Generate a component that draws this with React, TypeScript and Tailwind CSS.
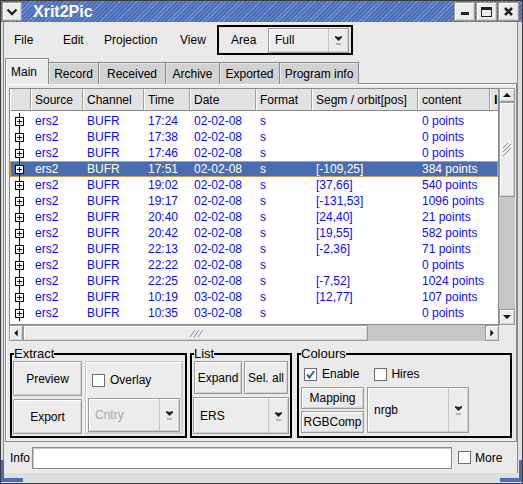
import React from "react";

type Row = { time: string; date: string; segm: string; content: string };

const ROWS: Row[] = [
  { time: "17:24", date: "02-02-08", segm: "", content: "0 points" },
  { time: "17:38", date: "02-02-08", segm: "", content: "0 points" },
  { time: "17:46", date: "02-02-08", segm: "", content: "0 points" },
  { time: "17:51", date: "02-02-08", segm: "[-109,25]", content: "384 points" },
  { time: "19:02", date: "02-02-08", segm: "[37,66]", content: "540 points" },
  { time: "19:17", date: "02-02-08", segm: "[-131,53]", content: "1096 points" },
  { time: "20:40", date: "02-02-08", segm: "[24,40]", content: "21 points" },
  { time: "20:42", date: "02-02-08", segm: "[19,55]", content: "582 points" },
  { time: "22:13", date: "02-02-08", segm: "[-2,36]", content: "71 points" },
  { time: "22:22", date: "02-02-08", segm: "", content: "0 points" },
  { time: "22:25", date: "02-02-08", segm: "[-7,52]", content: "1024 points" },
  { time: "10:19", date: "03-02-08", segm: "[12,77]", content: "107 points" },
  { time: "10:35", date: "03-02-08", segm: "", content: "0 points" },
];

const SELECTED = 3;

const COLS = [
  { label: "", cls: "w-[21px]" },
  { label: "Source", cls: "w-[52px]" },
  { label: "Channel", cls: "w-[61px]" },
  { label: "Time", cls: "w-[46px]" },
  { label: "Date", cls: "w-[66px]" },
  { label: "Format", cls: "w-[56px]" },
  { label: "Segm / orbit[pos]", cls: "w-[106px]" },
  { label: "content", cls: "w-[72px]" },
];

const TABS = [
  { label: "Main", cls: "w-[44px]" },
  { label: "Record", cls: "w-[50px]" },
  { label: "Received", cls: "w-[67px]" },
  { label: "Archive", cls: "w-[54px]" },
  { label: "Exported", cls: "w-[60px]" },
  { label: "Program info", cls: "w-[79px]" },
];

const raised =
  "border border-[#9a9a9a] bg-[#ececec] shadow-[inset_1px_1px_0_#ffffff,inset_-1px_-1px_0_#d2d2d2]";

function ComboArrow() {
  return (
    <svg width="9" height="12" viewBox="0 0 9 12">
      <path d="M1 2 L4.5 3 L8 2 L8 3.5 L4.5 7 L1 3.5 Z" fill="#222" />
      <rect x="2" y="9" width="5" height="2" fill="#b4b4b4" />
    </svg>
  );
}

function Combo({
  label,
  cls,
  arrowCls,
  disabled,
}: {
  label: string;
  cls: string;
  arrowCls: string;
  disabled?: boolean;
}) {
  return (
    <div className={`flex ${raised} ${cls}`}>
      <span
        className={`flex flex-1 items-center pl-[6px] ${disabled ? "text-[#a8a8a8]" : ""}`}
      >
        {label}
      </span>
      <span
        className={`flex items-center justify-center border-l border-[#c4c4c4] ${arrowCls}`}
      >
        <ComboArrow />
      </span>
    </div>
  );
}

function Check({ checked }: { checked?: boolean }) {
  return (
    <span className="flex h-[13px] w-[13px] items-center justify-center border border-[#6e6e6e] bg-white">
      {checked && (
        <svg width="11" height="11" viewBox="0 0 11 11">
          <path d="M2 5.5 L4.5 8.5 L9 2" fill="none" stroke="#3a5fb0" strokeWidth="2" />
        </svg>
      )}
    </span>
  );
}

function PlusBox() {
  return (
    <svg width="21" height="16" viewBox="0 0 21 16">
      <line x1="8.5" y1="0" x2="8.5" y2="16" stroke="#000" />
      <rect x="4.5" y="4.5" width="8" height="8" fill="#fff" stroke="#000" />
      <line x1="6" y1="8.5" x2="11" y2="8.5" stroke="#000" />
      <line x1="8.5" y1="6" x2="8.5" y2="11" stroke="#000" />
    </svg>
  );
}

function Grip({ vertical }: { vertical?: boolean }) {
  return (
    <svg width="14" height="14" viewBox="0 0 14 14">
      {[0, 4, 8].map((o) =>
        vertical ? (
          <line key={o} x1="3" y1={13 - o} x2="11" y2={5 - o} stroke="#8a8a8a" />
        ) : (
          <line key={o} x1={1 + o} y1="11" x2={6 + o} y2="4" stroke="#8a8a8a" />
        )
      )}
    </svg>
  );
}

function Arrow({ dir }: { dir: "up" | "down" | "left" | "right" }) {
  const d = {
    up: "M3 9 L7 5 L11 9 Z",
    down: "M3 5 L7 9 L11 5 Z",
    left: "M9 3 L5 7 L9 11 Z",
    right: "M5 3 L9 7 L5 11 Z",
  }[dir];
  return (
    <svg width="14" height="14" viewBox="0 0 14 14">
      <path d={d} fill="#111" />
    </svg>
  );
}

function TitleBar() {
  return (
    <div className="flex h-[21px] items-center bg-[repeating-linear-gradient(135deg,#6e8fd0_0px,#6e8fd0_1px,#4c6fb8_1px,#4c6fb8_3px)] pl-[1px] pr-[3px]">
      <div className={`flex h-[19px] w-[20px] items-center justify-center ${raised}`}>
        <svg width="12" height="10" viewBox="0 0 12 10">
          <path d="M1.5 2.5 L6 7 L10.5 2.5" fill="none" stroke="#222" strokeWidth="2.4" />
        </svg>
      </div>
      <span className="ml-[11px] flex-1 text-[16px] font-bold text-white">Xrit2Pic</span>
      <div className="flex gap-[1px]">
        <div className={`flex h-[19px] w-[21px] items-end justify-center pb-[5px] ${raised}`}>
          <span className="h-[3px] w-[8px] bg-[#222]" />
        </div>
        <div className={`flex h-[19px] w-[21px] items-center justify-center ${raised}`}>
          <span className="h-[10px] w-[11px] border border-t-[3px] border-[#222]" />
        </div>
        <div className={`flex h-[19px] w-[21px] items-center justify-center ${raised}`}>
          <svg width="11" height="11" viewBox="0 0 11 11">
            <path d="M2 2 L9 9 M9 2 L2 9" stroke="#222" strokeWidth="2.6" />
          </svg>
        </div>
      </div>
    </div>
  );
}

function FileList() {
  return (
    <div className="grid h-[253px] w-[506px] grid-cols-[490px_16px] grid-rows-[237px_16px]">
      <div className="flex flex-col overflow-hidden border border-[#8a8a8a] bg-white">
        <div className="flex h-[22px] shrink-0">
          {COLS.map((c) => (
            <div
              key={c.label}
              className={`flex items-center pl-[3px] ${c.cls} border-b border-l border-r border-b-[#8a8a8a] border-l-white border-r-[#a0a0a0] bg-[#e2e2e2]`}
            >
              {c.label}
            </div>
          ))}
          <div className="flex flex-1 items-center overflow-hidden border-b border-l border-b-[#8a8a8a] border-l-white bg-[#e2e2e2] pl-[3px] text-[13px] font-bold">
            l
          </div>
        </div>
        <div className="h-[2px] shrink-0" />
        {ROWS.map((r, i) => {
          const sel = i === SELECTED;
          return (
            <div
              key={r.time}
              className={`flex h-[16px] shrink-0 items-center ${
                sel
                  ? "border border-[#c9a050] bg-[#4a6cb0] text-white"
                  : "border border-transparent text-[#0c0cf0]"
              }`}
            >
              <span className="w-[20px]">
                <PlusBox />
              </span>
              <span className="w-[52px] pl-[4px]">ers2</span>
              <span className="w-[61px] pl-[4px]">BUFR</span>
              <span className="w-[46px] pl-[4px]">{r.time}</span>
              <span className="w-[66px] pl-[4px]">{r.date}</span>
              <span className="w-[56px] pl-[4px]">s</span>
              <span className="w-[106px] pl-[4px]">{r.segm}</span>
              <span className="w-[72px] pl-[4px] whitespace-nowrap">{r.content}</span>
            </div>
          );
        })}
      </div>
      <div className="flex flex-col bg-[#c6c6c6]">
        <div className={`flex h-[14px] items-center justify-center ${raised}`}>
          <Arrow dir="up" />
        </div>
        <div className={`flex h-[95px] items-center justify-center ${raised}`}>
          <Grip vertical />
        </div>
        <div className="flex-1" />
        <div className={`flex h-[16px] items-center justify-center ${raised}`}>
          <Arrow dir="down" />
        </div>
      </div>
      <div className="flex bg-[#c6c6c6]">
        <div className={`flex w-[14px] items-center justify-center ${raised}`}>
          <Arrow dir="left" />
        </div>
        <div className={`flex w-[345px] items-center justify-center ${raised}`}>
          <Grip />
        </div>
        <div className="flex-1" />
        <div className={`flex w-[14px] items-center justify-center ${raised}`}>
          <Arrow dir="right" />
        </div>
      </div>
      <div />
    </div>
  );
}

function Group({
  title,
  cls,
  children,
}: {
  title: string;
  cls: string;
  children: React.ReactNode;
}) {
  return (
    <fieldset className={`border-2 border-black px-[1px] pb-[1px] ${cls}`}>
      <legend className="ml-[1px] px-0 text-[13px] leading-[14px]">{title}</legend>
      {children}
    </fieldset>
  );
}

function Controls() {
  return (
    <div className="ml-[1px] mt-[6px] flex">
      <Group title="Extract" cls="h-[91px] w-[177px]">
        <div className="flex gap-[3px]">
          <div className="flex w-[69px] flex-col gap-[3px]">
            <button className={`h-[35px] ${raised}`}>Preview</button>
            <button className={`h-[35px] ${raised}`}>Export</button>
          </div>
          <div className={`flex h-[73px] w-[98px] flex-col ${raised} border-[#c8c8c8] px-[2px]`}>
            <div className="flex h-[36px] items-center gap-[5px] pl-[4px]">
              <Check />
              <span>Overlay</span>
            </div>
            <Combo label="Cntry" cls="h-[34px] w-[92px]" arrowCls="w-[20px]" disabled />
          </div>
        </div>
      </Group>
      <Group title="List" cls="ml-[3px] h-[91px] w-[102px]">
        <div className="flex gap-[2px] pl-[1px]">
          <button className={`h-[33px] w-[48px] ${raised}`}>Expand</button>
          <button className={`h-[33px] w-[44px] ${raised}`}>Sel. all</button>
        </div>
        <Combo label="ERS" cls="mt-[3px] h-[37px] w-[96px]" arrowCls="w-[20px]" />
      </Group>
      <Group title="Colours" cls="ml-[5px] h-[91px] w-[215px]">
        <div className="flex h-[26px] items-center pl-[4px]">
          <Check checked />
          <span className="ml-[5px]">Enable</span>
          <span className="ml-[15px]">
            <Check />
          </span>
          <span className="ml-[4px]">Hires</span>
        </div>
        <div className="flex gap-[3px] pl-[1px]">
          <div className="flex w-[63px] flex-col gap-[2px]">
            <button className={`h-[22px] ${raised}`}>Mapping</button>
            <button className={`h-[22px] ${raised}`}>RGBComp</button>
          </div>
          <Combo label="nrgb" cls="h-[46px] w-[102px]" arrowCls="w-[20px]" />
        </div>
      </Group>
    </div>
  );
}

export default function App() {
  return (
    <div className="relative flex h-[484px] w-[523px] flex-col overflow-hidden border border-[#3c3c3c] bg-[#dedede] font-['Liberation_Sans',Arial,sans-serif] text-[12px] text-black">
      <TitleBar />
      <div className="flex flex-1 flex-col pb-[10px] pl-[2px] pr-[4px]">
        <div className="flex flex-1 flex-col border-l border-r border-[#8a8a8a] bg-[#eaeaea]">
          <div className="flex h-[36px] items-center">
            <span className="w-[59px] pl-[10px]">File</span>
            <span className="w-[41px]">Edit</span>
            <span className="w-[76px]">Projection</span>
            <span className="w-[37px]">View</span>
            <div className="flex h-[30px] w-[136px] items-center border-2 border-black pl-[12px]">
              <span className="w-[37px]">Area</span>
              <Combo label="Full" cls="h-[25px] w-[81px]" arrowCls="w-[20px]" />
            </div>
          </div>
          <div className="relative z-10 -mb-[1px] flex h-[26px] items-end pl-[1px]">
            {TABS.map((t, i) =>
              i === 0 ? (
                <div
                  key={t.label}
                  className={`flex h-[26px] items-center border border-b-0 border-[#8a8a8a] bg-[#eaeaea] pl-[5px] shadow-[inset_1px_1px_0_#fff] ${t.cls}`}
                >
                  {t.label}
                </div>
              ) : (
                <div
                  key={t.label}
                  className={`flex h-[22px] items-center justify-center border border-b-0 border-l-0 border-[#8a8a8a] bg-[#d2d2d2] shadow-[inset_1px_1px_0_#e6e6e6] ${t.cls}`}
                >
                  {t.label}
                </div>
              )
            )}
          </div>
          <div className="ml-[1px] h-[359px] border border-[#8a8a8a] pl-[3px] pt-[4px] shadow-[inset_1px_1px_0_#fff]">
            <FileList />
            <Controls />
          </div>
          <div className="flex flex-1 items-center pl-[6px]">
            <span className="w-[22px]">Info</span>
            <div className="h-[22px] w-[420px] border border-[#8a8a8a] bg-white shadow-[inset_1px_1px_0_#c8c8c8]" />
            <span className="ml-[6px]">
              <Check />
            </span>
            <span className="ml-[4px]">More</span>
          </div>
        </div>
      </div>
      <div className="absolute bottom-[1px] left-0 h-[4px] w-[22px] bg-[#4a6cb8]" />
      <div className="absolute bottom-[1px] left-0 h-[22px] w-[3px] bg-[#4a6cb8]" />
      <div className="absolute bottom-[1px] right-0 h-[4px] w-[22px] bg-[#4a6cb8]" />
      <div className="absolute bottom-[1px] right-0 h-[22px] w-[3px] bg-[#4a6cb8]" />
    </div>
  );
}
